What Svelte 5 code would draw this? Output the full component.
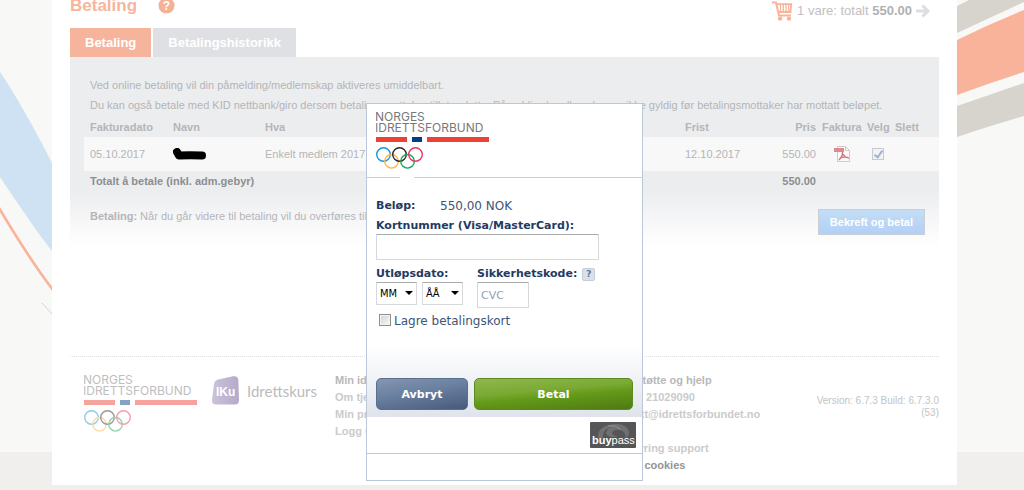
<script>
    const invoices = [
        { date: '05.10.2017', item: 'Enkelt medlem 2017', due: '12.10.2017', price: '550.00', selected: true }
    ];

    const accountLinks = ['Min idrett', 'Om tjenesten', 'Min profil', 'Logg ut'];

    const months = ['01', '02', '03', '04', '05', '06', '07', '08', '09', '10', '11', '12'];
    const years = ['17', '18', '19', '20', '21', '22'];

    let cardNumber = $state('');
    let month = $state('');
    let year = $state('');
    let cvc = $state('');
    let saveCard = $state(false);
</script>

{#snippet nifLogo()}
    <svg class="nif-logo" width="115" height="61" viewBox="0 -3 115 61" role="img" aria-label="Norges Idrettsforbund">
        <text x="-1" y="9">NORGES</text>
        <text x="-1" y="20">IDRETTSFORBUND</text>
        <rect x="0" y="25" width="31" height="5" fill="#ee4136" />
        <rect x="36" y="25" width="10" height="5" fill="#003f87" />
        <rect x="51" y="25" width="62" height="5" fill="#ee4136" />
        <g fill="none" stroke-width="1.4">
            <circle cx="7.5" cy="42.5" r="6.8" stroke="#1a94d8" />
            <circle cx="15.5" cy="49.3" r="6.8" stroke="#fbb845" />
            <circle cx="23.5" cy="42.5" r="6.8" stroke="#2b2a29" />
            <circle cx="31.5" cy="49.3" r="6.8" stroke="#1aa85a" />
            <circle cx="39.5" cy="42.5" r="6.8" stroke="#ec3560" />
        </g>
    </svg>
{/snippet}

<div class="site">
    <svg class="art art-left" width="52" height="330" viewBox="0 0 52 330" aria-hidden="true">
        <path d="M0 72 Q23 106 52 163 V251 Q38 234 0 177 Z" fill="#cfe2f3" />
        <path d="M-1 208 Q30 260 53 290" fill="none" stroke="#fab39b" stroke-width="2.6" />
        <path d="M42 303 L52 314" stroke="#d6d4cc" />
    </svg>
    <svg class="art art-right" width="67" height="140" viewBox="0 0 67 140" aria-hidden="true">
        <path d="M0 6 L12 0 H67 V2 L0 33 Z" fill="#d6d4cc" />
        <path d="M0 40 Q32 24 67 10 V72 Q32 83 0 95 Z" fill="#fab39b" />
        <path d="M0 106 L67 83 V116 Q32 126 0 137 Z" fill="#d6d4cc" />
    </svg>

    <main class="page">
        <header class="top">
            <h1>Betaling</h1>
            <button class="help" aria-label="Hjelp">
                <svg width="17" height="14" viewBox="0 0 17 14">
                    <circle cx="8.5" cy="5.5" r="8" fill="#f5b194" />
                    <text x="8.5" y="10" text-anchor="middle">?</text>
                </svg>
            </button>
            <a class="cart" href="#cart">
                <svg width="21" height="20" viewBox="0 0 21 20" fill="none" stroke="#f9b39c">
                    <path d="M0 1.5 H4 L7 14.5 H19" stroke-width="2" />
                    <path d="M4.5 3.2 H19.2 L18.5 11 H6.5" stroke-width="1.8" />
                    <path d="M8.5 3.5 V11 M11.3 3.5 V11 M14 3.5 V11 M16.7 3.5 V11" stroke-width="1.3" />
                    <circle cx="8" cy="17.6" r="2.2" fill="#f9b39c" stroke="none" />
                    <circle cx="17" cy="17.6" r="2.2" fill="#f9b39c" stroke="none" />
                </svg>
                <span>1 vare: totalt <b>550.00</b></span>
                <svg width="14" height="14" viewBox="0 0 14 14" fill="none" stroke="#dcdde0" stroke-width="3">
                    <path d="M0 7 H11 M6.5 1.5 L12 7 L6.5 12.5" />
                </svg>
            </a>
        </header>

        <nav class="tabs">
            <a class="active" href="#betaling">Betaling</a>
            <a href="#historikk">Betalingshistorikk</a>
        </nav>

        <section class="panel">
            <p>Ved online betaling vil din påmelding/medlemskap aktiveres umiddelbart.</p>
            <p>Du kan også betale med KID nettbank/giro dersom betalingsmottaker tillater dette. Påmelding/medlemskap er ikke gyldig før betalingsmottaker har mottatt beløpet.</p>

            <table>
                <thead>
                    <tr>
                        <th class="date">Fakturadato</th>
                        <th class="name">Navn</th>
                        <th>Hva</th>
                        <th class="due">Frist</th>
                        <th class="price">Pris</th>
                        <th class="invoice">Faktura</th>
                        <th class="pick">Velg</th>
                        <th class="remove">Slett</th>
                    </tr>
                </thead>
                <tbody>
                    {#each invoices as row}
                        <tr class="row">
                            <td class="date">{row.date}</td>
                            <td>
                                <svg width="33" height="12" viewBox="0 0 33 12" aria-label="Skjult navn">
                                    <path d="M4 4 L6 7.5 Q17 7 29 7.500" fill="none" stroke="#000" stroke-width="8" stroke-linecap="round" stroke-linejoin="round" />
                                </svg>
                            </td>
                            <td>{row.item}</td>
                            <td>{row.due}</td>
                            <td class="price">{row.price}</td>
                            <td class="center">
                                <a href="#faktura" aria-label="Last ned faktura">
                                    <svg width="16" height="16" viewBox="0 0 16 16">
                                        <path d="M3.5 .5 H11.5 L15.5 4.5 V15.5 H3.5 Z" fill="#fbfbfb" stroke="#dcc3c5" />
                                        <path d="M11.5 .5 V4.5 H15.5" fill="none" stroke="#dcc3c5" />
                                        <rect x="0" y="2" width="10" height="4" fill="#d98b90" />
                                        <path d="M8.5 6 Q9 10 5 14 M9 8 Q11 12 15 12 M6 12 Q10 10.5 14 11.5" fill="none" stroke="#d5737a" stroke-width="1.4" />
                                    </svg>
                                </a>
                            </td>
                            <td class="center"><input class="tick" type="checkbox" aria-label="Velg faktura" checked={row.selected} /></td>
                            <td></td>
                        </tr>
                    {/each}
                </tbody>
                <tfoot>
                    <tr>
                        <td class="date" colspan="4">Totalt å betale (inkl. adm.gebyr)</td>
                        <td class="price">550.00</td>
                        <td colspan="3"></td>
                    </tr>
                </tfoot>
            </table>

            <div class="confirm">
                <span><b>Betaling:</b> Når du går videre til betaling vil du overføres til Buypass</span>
                <button>Bekreft og betal</button>
            </div>
        </section>

        <footer>
            <div class="faded">{@render nifLogo()}</div>
            <svg class="iku" width="110" height="32" viewBox="0 0 110 32" role="img" aria-label="Idrettskurs">
                <defs>
                    <linearGradient id="iku" x1="0" y1="0" x2="1" y2="0">
                        <stop offset="0" stop-color="#cbc3da" />
                        <stop offset="1" stop-color="#b6a9ca" />
                    </linearGradient>
                </defs>
                <path d="M3 9 Q3.5 5.5 7 4.5 L22 1.3 Q27 .5 27.3 5 L28 25 Q28 29.5 24 29.5 H5 Q.8 29.5 1 25 Z" fill="url(#iku)" />
                <text class="iku-mark" x="5" y="21">IKu</text>
                <text class="iku-name" x="36" y="22">Idrettskurs</text>
            </svg>
            <ul>
                {#each accountLinks as link, i}
                    <li><a class:strong={i === 0} href="#konto">{link}</a></li>
                {/each}
            </ul>
            <ul>
                <li class="strong">Brukerstøtte og hjelp</li>
                <li>Telefon: 21029090</li>
                <li><a href="#epost">minidrett@idrettsforbundet.no</a></li>
                <li class="spaced"><a href="#support">Fjernstyring support</a></li>
                <li><a class="dark" href="#cookies">Bruk av cookies</a></li>
            </ul>
            <p class="version">Version: 6.7.3 Build: 6.7.3.0 (53)</p>
        </footer>
    </main>

    <div class="overlay">
        <form class="dialog" onsubmit={(e) => e.preventDefault()}>
            <div class="brand">{@render nifLogo()}</div>

            <div class="fields">
                <div class="amount"><b>Beløp:</b><span>550,00 NOK</span></div>

                <label class="title" for="card">Kortnummer (Visa/MasterCard):</label>
                <input id="card" class="text card" type="text" bind:value={cardNumber} />

                <div class="pair">
                    <div>
                        <label class="title" for="month">Utløpsdato:</label>
                        <div class="selects">
                            <span class="select">
                                <select id="month" bind:value={month}>
                                    <option value="">MM</option>
                                    {#each months as m}<option>{m}</option>{/each}
                                </select>
                            </span>
                            <span class="select">
                                <select aria-label="År" bind:value={year}>
                                    <option value="">ÅÅ</option>
                                    {#each years as y}<option>{y}</option>{/each}
                                </select>
                            </span>
                        </div>
                    </div>
                    <div>
                        <div class="code-title">
                            <label class="title" for="cvc">Sikkerhetskode:</label>
                            <button type="button" class="hint" aria-label="Hva er sikkerhetskode?">?</button>
                        </div>
                        <input id="cvc" class="text cvc" type="text" placeholder="CVC" bind:value={cvc} />
                    </div>
                </div>

                <label class="save"><input class="tick" type="checkbox" bind:checked={saveCard} />Lagre betalingskort</label>

                <div class="actions">
                    <button type="button" class="cancel">Avbryt</button>
                    <button type="submit" class="pay">Betal</button>
                </div>
            </div>

            <div class="provider">
                <svg width="46" height="26" viewBox="0 0 46 26" role="img" aria-label="buypass">
                    <rect width="46" height="26" rx="1" fill="#555557" />
                    <path d="M8 16 Q7 6 19 3 Q31 0 37 6 Q42 12 35 17 Q37 10 30 8 Q23 7 22 11 Q23 14 28 14 Q18 17 16 11 Q17 5 25 4 Q12 6 13 16 Z" fill="#707072" />
                    <path d="M18 4 Q28 3 30 8" fill="none" stroke="#868688" stroke-width="1.5" />
                    <text x="2" y="22"><tspan class="buy">buy</tspan><tspan>pass</tspan></text>
                </svg>
            </div>
            <div class="strip"></div>
        </form>
    </div>
</div>

<style>
    :global(body) {
        background-color: #f0efed;
    }

    .site {
        position: relative;
        box-sizing: border-box;
        min-height: 100vh;
        padding: 0 15px 5px 0;
        background: linear-gradient(#f0efed, #f0efed) bottom / 100% 38px no-repeat, #f8f8f6;
        font-family: "Liberation Sans", Arial, sans-serif;
        font-size: 11px;
        color: #b4b5b7;
    }

    .art {
        position: absolute;
        top: 0;
    }

    .art-left {
        left: 0;
    }

    .art-right {
        right: 0;
    }

    .page {
        position: relative;
        box-sizing: border-box;
        max-width: 905px;
        margin: 0 auto;
        padding: 0 18px 11px;
        background-color: #fff;
    }

    a {
        color: inherit;
        text-decoration: none;
    }

    button {
        padding: 0;
        border: 0;
        font-family: inherit;
        cursor: pointer;
    }

    svg {
        display: block;
    }

    .top {
        display: flex;
        align-items: flex-start;
        height: 28px;
    }

    h1 {
        margin: 0;
        font-size: 17px;
        line-height: 11px;
        color: #f7b59d;
    }

    .help {
        margin-left: 21px;
        background: none;
    }

    .help text {
        font-size: 12px;
        font-weight: bold;
        fill: #fff;
    }

    .cart {
        display: flex;
        align-items: center;
        gap: 4px;
        margin-left: auto;
        padding-right: 9px;
        font-size: 13px;
        line-height: 22px;
        color: #bfc0c1;
    }

    .cart b {
        color: #b0b1b3;
    }

    .tabs {
        display: flex;
        gap: 2px;
    }

    .tabs a {
        padding: 0 15px;
        background-color: #dfe0e4;
        font-size: 13px;
        font-weight: bold;
        line-height: 29px;
        color: #fff;
    }

    .tabs .active {
        background-color: #f6b49c;
    }

    .panel {
        padding: 18px 0 12px 14px;
        background: linear-gradient(#ecedef 70%, #fff);
    }

    .panel p {
        margin: 0 0 0 6px;
        line-height: 20px;
        white-space: nowrap;
    }

    table {
        width: 100%;
        margin-top: 2px;
        table-layout: fixed;
        border-collapse: collapse;
    }

    th,
    td {
        height: 20px;
        padding: 0 3px;
        text-align: left;
    }

    .row {
        background-color: #f8f8f8;
    }

    .row td {
        height: 34px;
    }

    .date {
        width: 77px;
        padding-left: 6px;
    }

    .name {
        width: 86px;
    }

    .due {
        width: 70px;
    }

    .price {
        width: 55px;
        text-align: right;
    }

    .invoice {
        width: 39px;
    }

    .pick {
        width: 22px;
    }

    .remove {
        width: 41px;
    }

    .center svg,
    .center .tick {
        margin: 0 auto;
    }

    tfoot {
        font-weight: bold;
        color: #8c8d8f;
    }

    .tick {
        display: block;
        appearance: none;
        width: 12px;
        height: 12px;
        margin: 0;
        border: 1px solid #c9cacd;
        background-color: #f1f2f4;
    }

    .tick:checked::after {
        content: '';
        display: block;
        box-sizing: border-box;
        width: 5px;
        height: 9px;
        margin: 0 auto;
        border: solid #a3afd3;
        border-width: 0 2px 2px 0;
        transform: rotate(35deg);
    }

    .confirm {
        display: flex;
        justify-content: space-between;
        align-items: flex-start;
        padding: 18px 14px 0 6px;
        line-height: 14px;
    }

    .confirm button {
        padding: 0 11px;
        border: 1px solid #c8cfd6;
        background: linear-gradient(#c3def5, #b3cff6);
        font-size: 11px;
        font-weight: bold;
        line-height: 24px;
        color: #fff;
    }

    footer {
        display: grid;
        grid-template-columns: 127px 124px 266px 1fr 130px;
        margin-top: 109px;
        padding: 15px 0 0 14px;
        border-top: 1px dotted #e0e0e0;
    }

    ul {
        margin: 0;
        padding: 0;
        list-style: none;
        font-weight: bold;
        line-height: 17px;
        color: #cbcbcb;
    }

    .strong {
        color: #b8b8b9;
    }

    .dark {
        color: #949494;
    }

    .spaced {
        margin-top: 17px;
    }

    .faded {
        opacity: 0.48;
    }

    .nif-logo text {
        font-family: Inter, sans-serif;
        font-size: 12px;
        fill: #77787a;
    }

    .iku {
        margin-top: 3px;
    }

    .iku-mark {
        font-size: 12px;
        font-weight: bold;
        fill: #fff;
    }

    .iku-name {
        font-family: Lato, sans-serif;
        font-size: 15px;
        fill: #bbb;
    }

    .version {
        margin: 23px 0 0;
        font-size: 10px;
        line-height: 12px;
        text-align: right;
        color: #c4c4c4;
    }

    .overlay {
        position: absolute;
        inset: 0;
        display: flex;
        justify-content: center;
        align-items: flex-start;
        padding: 103px 15px 0 0;
    }

    .dialog {
        box-sizing: border-box;
        width: 277px;
        border: 1px solid #bcc7dc;
        background-color: #fff;
        font-family: "DejaVu Sans", Verdana, sans-serif;
        font-size: 11px;
        line-height: 14px;
        color: #3b5578;
    }

    .brand {
        position: relative;
        padding: 5px 9px 7px;
        border-bottom: 1px solid #c5cfe2;
    }

    /* notch in the divider under the logo */
    .brand::after {
        content: '';
        position: absolute;
        bottom: -1px;
        left: 33px;
        width: 14px;
        height: 1px;
        background-color: #fff;
    }

    .fields {
        padding: 21px 9px 7px;
        background: linear-gradient(#fff 70%, #dfe4ec);
    }

    .amount {
        display: flex;
        margin-bottom: 6px;
    }

    .amount b {
        width: 64px;
    }

    .amount span,
    .save {
        font-size: 12px;
    }

    .amount b,
    .title {
        font-weight: bold;
        color: #1f3b63;
    }

    .title {
        display: block;
        margin-bottom: 1px;
    }

    .text,
    select {
        box-sizing: border-box;
        display: block;
        border: 1px solid #d5d8dd;
        border-top-color: #a9abae;
        background-color: #fff;
        font-family: inherit;
        font-size: 11px;
    }

    .text {
        height: 26px;
        padding: 0 3px;
        border-radius: 1px;
        color: #3b5578;
    }

    .card {
        width: 223px;
    }

    .pair {
        display: flex;
        gap: 14px;
        margin-top: 7px;
    }

    .selects {
        display: flex;
        gap: 5px;
    }

    .select {
        position: relative;
    }

    .select::after {
        content: '';
        position: absolute;
        top: 9px;
        right: 4px;
        border: solid transparent;
        border-width: 4px 4px 0;
        border-top-color: #000;
        pointer-events: none;
    }

    select {
        appearance: none;
        width: 41px;
        height: 23px;
        padding: 0 3px;
        font-family: "DejaVu Sans Condensed", "DejaVu Sans", sans-serif;
        color: #000;
    }

    .cvc {
        width: 52px;
    }

    .cvc::placeholder {
        color: #93a1b5;
        opacity: 1;
    }

    .code-title {
        display: flex;
        gap: 5px;
    }

    .hint {
        width: 13px;
        height: 13px;
        margin-top: 1px;
        border: 1px solid #c3cddc;
        border-radius: 2px;
        background-color: #d9e0ea;
        font-size: 9px;
        font-weight: bold;
        line-height: 11px;
        color: #5f7698;
    }

    .save {
        display: flex;
        gap: 3px;
        margin: 6px 0 0 3px;
    }

    .save .tick {
        box-sizing: border-box;
        border-color: #8e8f8f;
        background: linear-gradient(135deg, #cfd3d8, #f8f8f8);
        box-shadow: inset 0 0 0 1px #f4f4f4;
    }

    .actions {
        display: flex;
        gap: 6px;
        margin-top: 50px;
    }

    .actions button {
        height: 32px;
        border-radius: 5px;
        font-size: 11px;
        font-weight: bold;
        color: #fff;
    }

    .cancel {
        width: 92px;
        border: 1px solid #5a6f8e;
        background: linear-gradient(170deg, #8496b2, #687f9f 45%, #48597a);
    }

    .pay {
        flex: 1;
        border: 1px solid #5c8a1e;
        background: linear-gradient(175deg, #8fb84e, #7aa932 40%, #659b1a 55%, #4e7a12);
    }

    .provider {
        display: flex;
        justify-content: flex-end;
        padding: 5px 6px;
        border-bottom: 1px solid #bcc7dc;
    }

    .provider text {
        font-family: "Liberation Sans", Arial, sans-serif;
        font-size: 11px;
        fill: #fff;
    }

    .buy {
        font-weight: bold;
    }

    .strip {
        height: 26px;
    }
</style>
